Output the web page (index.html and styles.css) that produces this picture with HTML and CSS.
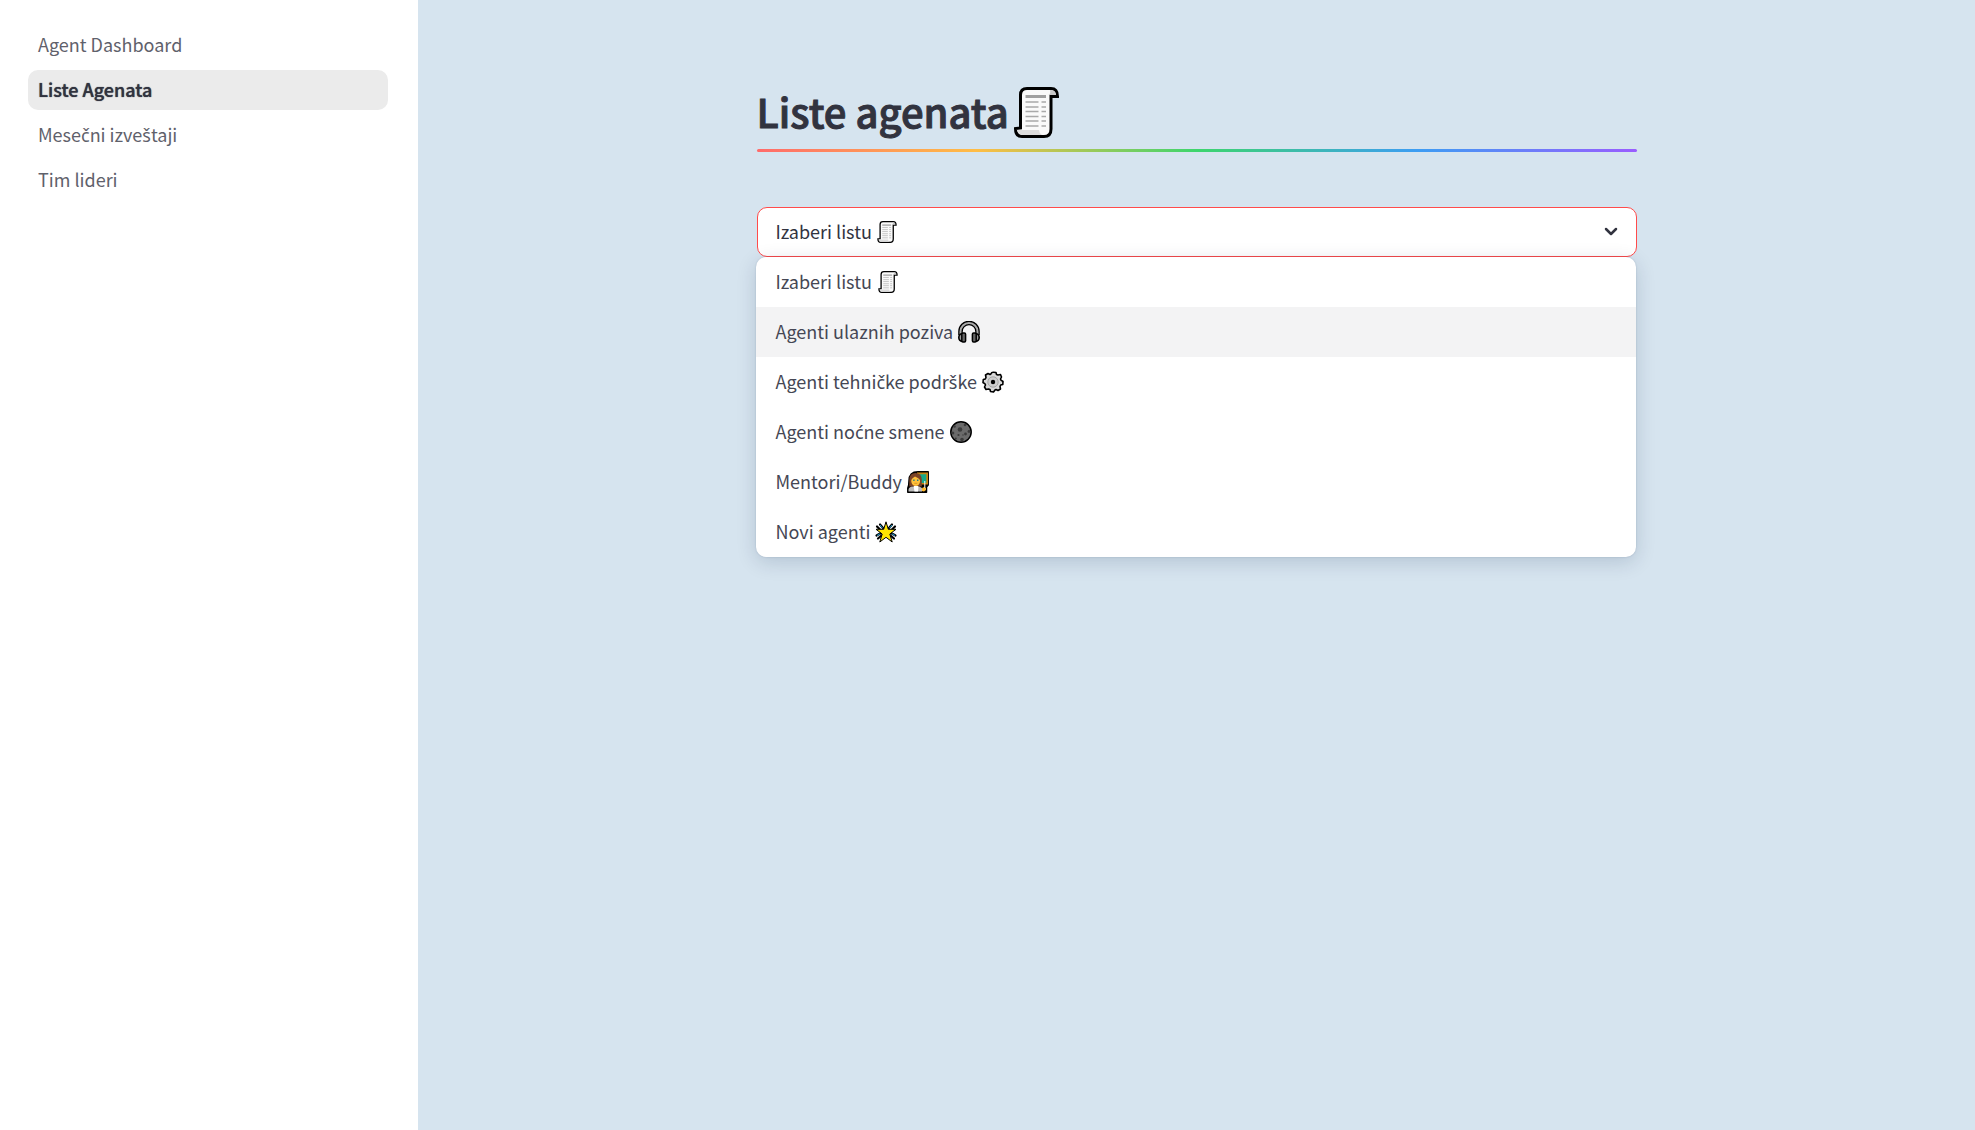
FILE: index.html
```html
<!DOCTYPE html>
<html lang="sr-Latn">
<head>
<meta charset="utf-8">
<meta name="viewport" content="width=device-width, initial-scale=1">
<title>Liste Agenata</title>
<link rel="stylesheet" href="styles.css">
</head>
<body>
<svg class="sprite" aria-hidden="true">
  <symbol id="scroll" viewBox="0 0 45 51">
    <path d="M6.5 41V8Q6.5 1.5 13 1.5H37Q43.5 1.5 43.5 9.5H37V42Q37 49.5 30 49.5H8Q1.5 49.5 1.5 41.5Z" fill="#fafafa" stroke="#000" stroke-width="3"/>
    <path d="M36 3Q42 3 42 8H34.5Q37 7 36 3Z" fill="#c8c8c8"/>
    <path d="M3 43H25Q25 46 28 48H8Q4 47 3 43Z" fill="#ddd"/>
    <path d="M11.500 9.500H32" stroke="#a0a0a0" stroke-width="3"/>
    <path d="M11.500 15H24.500M27.500 15H32M11.500 20H24.500M27.500 20H32M11.500 24.500H24.500M27.500 24.500H32M11.500 29.500H24.500M27.500 29.500H32M11.500 34H24.500M27.500 34H32M11.500 39H24.500M27.500 39H32" stroke="#a9a9a9" stroke-width="1.500"/>
  </symbol>
  <symbol id="headphones" viewBox="0 0 22 22">
    <path d="M2.500 14V10.500a8.500 8.500 0 0 1 17 0V14" fill="none" stroke="#000" stroke-width="4.600"/>
    <path d="M2.500 14V10.500a8.500 8.500 0 0 1 17 0V14" fill="none" stroke="#aaa" stroke-width="2"/>
    <path d="M4.500 12.500Q.8 13 .8 16.500T4.500 20.500M17.500 12.500q3.700.5 3.700 4t-3.700 4" fill="#999" stroke="#000" stroke-width="1.600"/>
    <rect x="3.800" y="12" width="3.800" height="9" rx="1.200" fill="#666" stroke="#000" stroke-width="1.500"/>
    <rect x="14.400" y="12" width="3.800" height="9" rx="1.200" fill="#666" stroke="#000" stroke-width="1.500"/>
  </symbol>
  <symbol id="gear" viewBox="0 0 22 22">
    <path d="M9 2.800Q9.500 1 11.500 1.200L14 1.500L14.500 3.500L16 4L18.500 3.500L19.500 6L18.500 8L19 9.200L21 10.500L20.800 13.500L18.700 14L18 15.500L18.500 18L16 19.500L14 18.500L13 19L11.500 21L8.500 20.500L8 18.500L6.500 18L4 18.500L2.500 16L3.500 14L3 12.800L1 11.500L1.300 8.500L3.300 8L4 6.500L3.500 4L6 2.500L8 3.500Z" fill="#d8d8d8" stroke="#000" stroke-width="1.600" stroke-linejoin="round"/>
    <circle cx="11" cy="11" r="5.200" fill="#ccc" stroke="#999" stroke-width=".8"/>
    <circle cx="11" cy="11" r="2.200" fill="#000"/>
  </symbol>
  <symbol id="moon" viewBox="0 0 22 22">
    <circle cx="11" cy="11" r="10.200" fill="#6b6b6b" stroke="#000" stroke-width="1.500"/>
    <g fill="#3c3c3c"><circle cx="10" cy="8.500" r="2.300"/><circle cx="15.500" cy="13" r="1.400"/><circle cx="8.500" cy="14" r="1.100"/><circle cx="15" cy="4" r="1.300"/><circle cx="4.500" cy="5.500" r="1.300"/><circle cx="2.800" cy="12" r="1.500"/><circle cx="19" cy="10.500" r="1.400"/><circle cx="12" cy="18.500" r="1.800"/><circle cx="5.800" cy="17.500" r="1"/><circle cx="13" cy="14" r=".7"/></g>
  </symbol>
  <symbol id="teacher" viewBox="0 0 22 22">
    <path d="M.8 21.200V17Q2 14.500 2 10Q2 .8 11 .8H21.200V14L19.500 16V21.200Z" fill="#000" stroke="#000" stroke-width="1.500" stroke-linejoin="round"/>
    <path d="M10 1.500H21V13.500H10Z" fill="#c98311"/>
    <path d="M11 3.200H19.300V12H11Z" fill="#16a889"/>
    <path d="M2.300 15.500V9Q2.300 2 8.500 2T14.800 9V15.500Z" fill="#7b4327"/>
    <path d="M4.300 9Q5 7 8 5.500Q12 7 13 9V11Q12 15 8.700 15T4.300 11Z" fill="#ffc13b"/>
    <path d="M6.200 9.200h1.400M10 9.200h1.400" stroke="#237d83" stroke-width="1.500"/>
    <path d="M7.300 12.300h3" stroke="#d08a20" stroke-width=".8"/>
    <path d="M1.500 20.500V18.500Q2 15.800 5.500 15.500L9 17L12.300 15.500L15 17V20.500Z" fill="#bbb"/>
    <path d="M6.500 15H11.500L11 20.500H7.500Z" fill="#fff"/>
    <path d="M15 20V17.500Q16 15.500 19 17V19L17 20.500Z" fill="#ffb92e"/>
    <path d="M17.800 10V17" stroke="#fff" stroke-width="1"/>
  </symbol>
  <symbol id="star" viewBox="0 0 22 22">
    <path d="M5 3.500L8.500 7.500M2 5.500L5 8.500M17 3.500L13.500 7.500M20 5.500L17 8.500M1.500 14.500L6 12M3 17.500L6.500 14.500M20.500 14.500L16 12M19 17.500L15.500 14.500" stroke="#000" stroke-width="2.200" stroke-linecap="round"/>
    <path d="M5 4L7.500 7M17 4L14.500 7M2 14.500L5 12.800M20 14.500L17 12.800" stroke="#199bd0" stroke-width="1"/>
    <path d="M11 .8L13.300 8.300H21L14.800 13L17.200 21L11 16.300L4.800 21L7.200 13L1 8.300H8.700Z" fill="#ffe500" stroke="#000" stroke-width="1"/>
  </symbol>
</svg>
<div class="app">
  <aside class="sidebar">
    <nav class="nav" aria-label="Stranice">
      <a class="nav-link" href="#dashboard">Agent Dashboard</a>
      <a class="nav-link active" href="#liste" aria-current="page">Liste Agenata</a>
      <a class="nav-link" href="#izvestaji">Mese<span class="accented">č</span>ni izve<span class="accented">š</span>taji</a>
      <a class="nav-link" href="#lideri">Tim lideri</a>
    </nav>
  </aside>
  <main class="main">
    <div class="content">
      <h1 class="title"><span>Liste agenata</span><svg class="title-icon" aria-hidden="true"><use href="#scroll"/></svg></h1>
      <hr class="rainbow">
      <div class="picker">
        <select class="picker-select" aria-label="Izaberi listu">
          <option>Izaberi listu</option>
          <option>Agenti ulaznih poziva</option>
          <option>Agenti tehničke podrške</option>
          <option>Agenti noćne smene</option>
          <option>Mentori/Buddy</option>
          <option>Novi agenti</option>
        </select>
        <svg class="icon picker-icon" aria-hidden="true"><use href="#scroll"/></svg>
        <svg class="chevron" viewBox="0 0 14 10" aria-hidden="true"><path d="M2 2L7 7L12 2" fill="none" stroke="#31333f" stroke-width="2.500" stroke-linecap="round" stroke-linejoin="round"/></svg>
        <ul class="menu" role="listbox" aria-label="Liste">
          <li class="option" role="option" aria-selected="true"><span>Izaberi listu</span><svg class="icon" aria-hidden="true"><use href="#scroll"/></svg></li>
          <li class="option highlighted" role="option"><span>Agenti ulaznih poziva</span><svg class="icon" aria-hidden="true"><use href="#headphones"/></svg></li>
          <li class="option" role="option"><span>Agenti tehni<span class="accented">č</span>ke podr<span class="accented">š</span>ke</span><svg class="icon" aria-hidden="true"><use href="#gear"/></svg></li>
          <li class="option" role="option"><span>Agenti no<span class="accented">ć</span>ne smene</span><svg class="icon" aria-hidden="true"><use href="#moon"/></svg></li>
          <li class="option" role="option"><span>Mentori/Buddy</span><svg class="icon" aria-hidden="true"><use href="#teacher"/></svg></li>
          <li class="option" role="option"><span>Novi agenti</span><svg class="icon" aria-hidden="true"><use href="#star"/></svg></li>
        </ul>
      </div>
    </div>
  </main>
</div>
</body>
</html>
```
FILE: styles.css
```css
* { box-sizing: border-box; }

body {
  margin: 0;
  color: #31333f;
  font: 18px/24px "Noto Sans CJK SC", "Noto Sans", sans-serif;
}

/* Noto Sans CJK has no precomposed č, ć and š */
.accented { font-family: "Noto Sans", sans-serif; line-height: 1; }

.sprite { position: absolute; width: 0; height: 0; }

.app { display: flex; min-height: 100vh; }

.sidebar { flex: 0 0 418px; padding: 25px 30px 25px 28px; background: #fff; }
.nav { display: flex; flex-direction: column; gap: 5px; }
.nav-link {
  padding: 7px 10px 9px;
  border-radius: 10px;
  color: #5f616b;
  text-decoration: none;
}
.nav-link.active {
  background: #ebebeb;
  color: #31333f;
  font-weight: 500;
  text-shadow: 0 0 1px currentColor;
}

.main { flex: 1; min-width: 0; padding: 84px 40px; background: #d6e4ef; }
.content { max-width: 880px; margin: 0 auto; }

.title {
  display: flex;
  align-items: center;
  gap: 5px;
  margin: 0;
  font-size: 40px;
  line-height: 54px;
  font-weight: 500;
  -webkit-text-stroke: 1px currentColor;
}
.title > span { padding-bottom: 2px; }
.title-icon { width: 45px; height: 51px; }

.rainbow {
  height: 3px;
  margin: 9px 0 55px;
  border: 0;
  border-radius: 2px;
  background: linear-gradient(to right, #ff6b6b, #ffbd45, #3dd56d, #3d9df3, #9a5dff);
}

.picker { position: relative; }
.picker-select {
  display: block;
  width: 100%;
  height: 50px;
  padding: 0 18px 2px;
  appearance: none;
  border: 1px solid #ff4b4b;
  border-radius: 10px;
  background: #fff;
  color: inherit;
  font: inherit;
}
.icon { width: 22px; height: 22px; }
.picker-icon { position: absolute; top: 14px; left: 119px; pointer-events: none; }
.chevron { position: absolute; top: 20px; right: 19px; width: 14px; height: 10px; pointer-events: none; }

.menu {
  position: absolute;
  top: 50px;
  left: -1px;
  width: 100%;
  margin: 0;
  padding: 0;
  overflow: hidden;
  border-radius: 10px;
  background: #fff;
  box-shadow: 0 5px 20px rgba(0, 30, 70, .16), 0 0 2px rgba(0, 30, 70, .18);
  list-style: none;
}
.option { display: flex; align-items: center; gap: 5px; height: 50px; padding: 0 20px; color: #454754; }
.option > span { padding-bottom: 2px; }
.option.highlighted { background: #f3f3f4; }
```
